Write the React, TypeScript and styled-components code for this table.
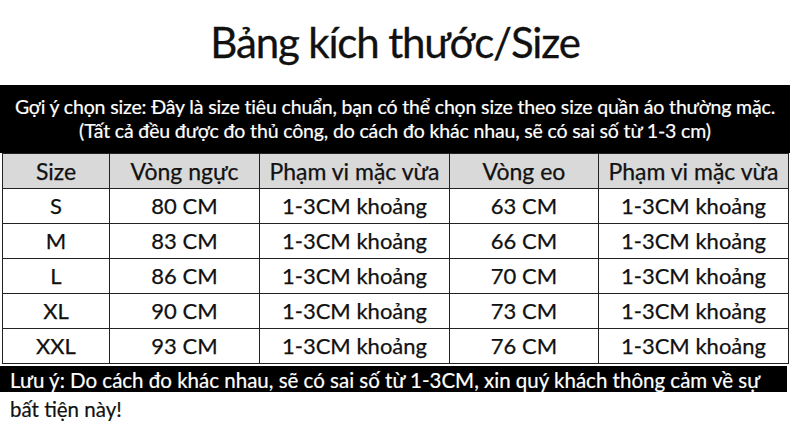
import React from "react";
import styled, { createGlobalStyle } from "styled-components";

const Global = createGlobalStyle`
  html, body { margin: 0; padding: 0; background: #ffffff; }
  body { font-family: Lato, "Noto Sans", sans-serif; color: #111; }
`;

const Page = styled.div`
  width: 790px;
  height: 431px;
  overflow: hidden;
  display: flex;
  flex-direction: column;
`;

const Title = styled.h1`
  margin: 0;
  height: 85px;
  display: flex;
  align-items: center;
  justify-content: center;
  font-size: 42px;
  letter-spacing: -1.15px;
  font-weight: 400;
  color: #111;
  padding-bottom: 2px;
  box-sizing: border-box;
  -webkit-text-stroke: 0.3px #111;
`;

const HintBand = styled.div`
  background: #000;
  color: #fff;
  height: 68px;
  display: flex;
  flex-direction: column;
  align-items: center;
  justify-content: center;
  font-size: 19.5px;
  letter-spacing: -0.15px;
  line-height: 24px;
  white-space: nowrap;
  padding-bottom: 1px;
  box-sizing: border-box;
  -webkit-text-stroke: 0.2px #fff;
`;

const Table = styled.table`
  border-collapse: collapse;
  margin: 0 2px;
  width: 786px;
  table-layout: fixed;
`;

const Cell = styled.td<{ $head?: boolean }>`
  border: 1.5px solid #222;
  height: 34px;
  padding: 0;
  text-align: center;
  white-space: nowrap;
  font-size: ${(p) => (p.$head ? "23px" : "22px")};
  line-height: 30px;
  background: ${(p) => (p.$head ? "#d9d9d9" : "#fff")};
  color: #111;
  -webkit-text-stroke: 0.25px #111;
`;

const NoteBand = styled.div`
  margin-top: 2px;
  margin-right: 3px;
  background: #000;
  color: #fff;
  height: 26px;
  box-sizing: border-box;
  padding: 2px 0 0 10px;
  font-size: 20.5px;
  line-height: 24px;
  white-space: nowrap;
  -webkit-text-stroke: 0.2px #fff;
`;

const NoteTail = styled.div`
  margin-top: 4px;
  font-size: 20.5px;
  line-height: 26px;
  padding-left: 10px;
  color: #111;
  -webkit-text-stroke: 0.2px #111;
`;

const widths = [107, 150, 190, 149, 190];
const head = ["Size", "Vòng ngực", "Phạm vi mặc vừa", "Vòng eo", "Phạm vi mặc vừa"];
const rows = [
  ["S", "80 CM", "63 CM"],
  ["M", "83 CM", "66 CM"],
  ["L", "86 CM", "70 CM"],
  ["XL", "90 CM", "73 CM"],
  ["XXL", "93 CM", "76 CM"],
];

export default function App() {
  return (
    <Page>
      <Global />
      <Title>Bảng kích thước/Size</Title>
      <HintBand>
        <div>Gợi ý chọn size: Đây là size tiêu chuẩn, bạn có thể chọn size theo size quần áo thường mặc.</div>
        <div>(Tất cả đều được đo thủ công, do cách đo khác nhau, sẽ có sai số từ 1-3 cm)</div>
      </HintBand>
      <Table>
        <colgroup>
          {widths.map((w, i) => (
            <col key={i} style={{ width: w }} />
          ))}
        </colgroup>
        <tbody>
          <tr>
            {head.map((h, i) => (
              <Cell key={i} $head>
                {h}
              </Cell>
            ))}
          </tr>
          {rows.map((r) => (
            <tr key={r[0]}>
              <Cell>{r[0]}</Cell>
              <Cell>{r[1]}</Cell>
              <Cell>1-3CM khoảng</Cell>
              <Cell>{r[2]}</Cell>
              <Cell>1-3CM khoảng</Cell>
            </tr>
          ))}
        </tbody>
      </Table>
      <NoteBand>Lưu ý: Do cách đo khác nhau, sẽ có sai số từ 1-3CM, xin quý khách thông cảm về sự</NoteBand>
      <NoteTail>bất tiện này!</NoteTail>
    </Page>
  );
}
